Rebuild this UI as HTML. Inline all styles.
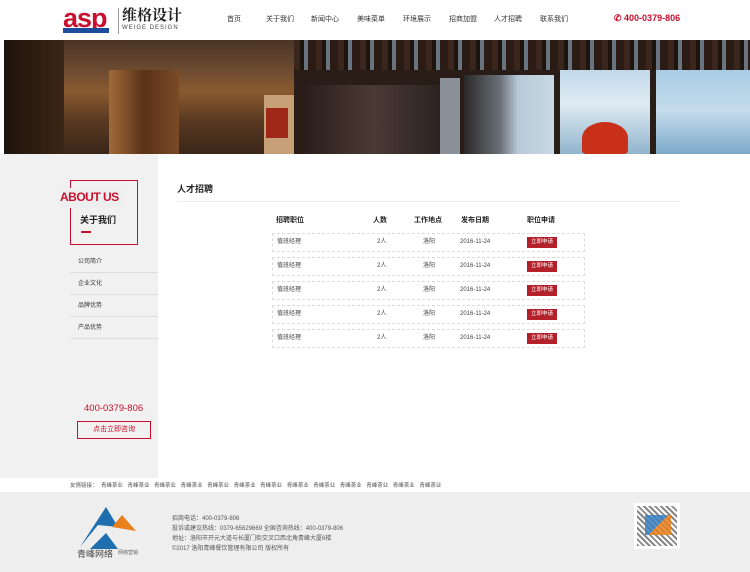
<!DOCTYPE html>
<html><head><meta charset="utf-8"><style>
*{margin:0;padding:0;box-sizing:border-box}
body{width:750px;height:572px;overflow:hidden;background:#fff;font-family:"Liberation Sans","Noto Sans CJK SC",sans-serif;color:#333;position:relative}
.a{position:absolute}
.nav span{position:absolute;top:15px;font-size:7px;line-height:9px;color:#333}
.side{left:0;top:154px;width:158px;height:324px;background:#f2f1f1}
.menu div{position:absolute;left:70px;width:88px;height:22px;border-bottom:1px solid #ddd;font-size:6px;color:#333;padding-left:8px;line-height:22px}
.row{position:absolute;left:272px;width:313px;height:19px;border:1px dashed #ddd;font-size:6px;color:#444}
.row span{position:absolute;top:3px;line-height:11px}
.btn{position:absolute;left:254px;top:3px;width:30px;height:11px;background:#b3202a;color:#fff;font-size:5.5px;text-align:center;line-height:11px}
.fl{position:absolute;top:482px;font-size:5.5px;line-height:8px;color:#555}
.b{position:absolute}
</style></head><body>
<div class="a" style="left:63px;top:4px;font:bold 27px/28px 'Liberation Sans',sans-serif;color:#c8102e;letter-spacing:-1px">asp</div>
<div class="a" style="left:63px;top:28px;width:46px;height:5px;background:#1c4d9c"></div>
<div class="a" style="left:118px;top:8px;width:1px;height:26px;background:#999"></div>
<div class="a" style="left:122px;top:6px;font:bold 15px/18px 'Noto Serif CJK SC',serif;color:#222">维格设计</div>
<div class="a" style="left:122px;top:25px;font-size:6px;color:#444;letter-spacing:1px">WEIGE DESIGN</div>
<div class="nav">
<span style="left:227px">首页</span><span style="left:266px">关于我们</span><span style="left:311px">新闻中心</span><span style="left:357px">美味菜单</span><span style="left:403px">环境展示</span><span style="left:449px">招商加盟</span><span style="left:494px">人才招聘</span><span style="left:540px">联系我们</span>
</div>
<div class="a" style="left:614px;top:13px;font-size:9px;color:#c8102e;font-weight:bold">✆ 400-0379-806</div>
<div class="a" style="left:4px;top:40px;width:746px;height:114px;overflow:hidden;background:#2a1a10">
 <div class="b" style="left:0;top:0;width:60px;height:114px;background:linear-gradient(90deg,#1e140c,#3a2616)"></div>
 <div class="b" style="left:60px;top:0;width:230px;height:114px;background:linear-gradient(180deg,#4a3426 0,#6a4a30 25%,#8a5a30 45%,#5a3a22 70%,#3a2618 100%)"></div>
 <div class="b" style="left:105px;top:30px;width:70px;height:84px;background:linear-gradient(90deg,#a06a38,#5a3218,#7a4a26)"></div>
 <div class="b" style="left:260px;top:55px;width:30px;height:59px;background:#c8a078"></div>
 <div class="b" style="left:262px;top:68px;width:22px;height:30px;background:#a02818"></div>
 <div class="b" style="left:290px;top:0;width:460px;height:114px;background:#2a1c16"></div>
 <div class="b" style="left:300px;top:45px;width:140px;height:69px;background:linear-gradient(90deg,#2a1e1a,#4a3a34,#2a2220)"></div>
 <div class="b" style="left:436px;top:38px;width:20px;height:76px;background:#8a9098"></div>
 <div class="b" style="left:460px;top:35px;width:90px;height:79px;background:linear-gradient(90deg,#2a2828,#6a7078 40%,#b8cad8 60%,#c8d8e4)"></div>
 <div class="b" style="left:556px;top:30px;width:90px;height:84px;background:linear-gradient(180deg,#c0d8ea,#e0ecf4 40%,#90b4cc)"></div>
 <div class="b" style="left:652px;top:28px;width:94px;height:86px;background:linear-gradient(180deg,#a8cce4,#c4dcec 50%,#7ca8c8)"></div>
 <div class="b" style="left:290px;top:0;width:460px;height:30px;background:repeating-linear-gradient(90deg,#3a261c 0 6px,#1e140e 6px 10px,#6a7480 10px 14px,#2a1c14 14px 22px)"></div>
 <div class="b" style="left:578px;top:82px;width:46px;height:32px;border-radius:50% 50% 10% 10%;background:#c8301a"></div>
</div>
<div class="a side"></div>
<div class="a" style="left:70px;top:180px;width:68px;height:65px;border:1px solid #c8102e"></div>
<div class="a" style="left:60px;top:188px;width:64px;height:20px;background:#eee"></div>
<div class="a" style="left:60px;top:190px;font-size:12px;font-weight:bold;color:#c8102e;letter-spacing:-.5px">ABOUT US</div>
<div class="a" style="left:80px;top:213px;font-size:9px;font-weight:bold;color:#222">关于我们</div>
<div class="a" style="left:81px;top:231px;width:10px;height:2px;background:#c8102e"></div>
<div class="menu">
<div style="top:251px">公司简介</div><div style="top:273px">企业文化</div><div style="top:295px">品牌优势</div><div style="top:317px">产品优势</div>
</div>
<div class="a" style="left:84px;top:403px;font-size:9.5px;color:#c8102e">400-0379-806</div>
<div class="a" style="left:77px;top:421px;width:74px;height:18px;border:1px solid #c8102e;font-size:7px;color:#c8102e;text-align:center;line-height:16px">点击立即咨询</div>
<div class="a" style="left:177px;top:182px;font-size:9px;font-weight:bold;color:#222">人才招聘</div>
<div class="a" style="left:177px;top:201px;width:503px;height:1px;background:#eee"></div>
<div class="a" style="top:215px;left:276px;font-size:7px;font-weight:bold;color:#222">招聘职位</div>
<div class="a" style="top:215px;left:373px;font-size:7px;font-weight:bold;color:#222">人数</div>
<div class="a" style="top:215px;left:414px;font-size:7px;font-weight:bold;color:#222">工作地点</div>
<div class="a" style="top:215px;left:461px;font-size:7px;font-weight:bold;color:#222">发布日期</div>
<div class="a" style="top:215px;left:527px;font-size:7px;font-weight:bold;color:#222">职位申请</div>
<div class="row" style="top:233px"><span style="left:4px">值班经理</span><span style="left:104px">2人</span><span style="left:150px">洛阳</span><span style="left:187px">2016-11-24</span><div class="btn">立即申请</div></div>
<div class="row" style="top:257px"><span style="left:4px">值班经理</span><span style="left:104px">2人</span><span style="left:150px">洛阳</span><span style="left:187px">2016-11-24</span><div class="btn">立即申请</div></div>
<div class="row" style="top:281px"><span style="left:4px">值班经理</span><span style="left:104px">2人</span><span style="left:150px">洛阳</span><span style="left:187px">2016-11-24</span><div class="btn">立即申请</div></div>
<div class="row" style="top:305px"><span style="left:4px">值班经理</span><span style="left:104px">2人</span><span style="left:150px">洛阳</span><span style="left:187px">2016-11-24</span><div class="btn">立即申请</div></div>
<div class="row" style="top:329px"><span style="left:4px">值班经理</span><span style="left:104px">2人</span><span style="left:150px">洛阳</span><span style="left:187px">2016-11-24</span><div class="btn">立即申请</div></div>
<div class="fl" style="left:70px">友情链接：</div>
<div class="fl" style="left:101px;word-spacing:3px;white-space:nowrap">青峰茶业 青峰茶业 青峰茶业 青峰茶业 青峰茶业 青峰茶业 青峰茶业 青峰茶业 青峰茶业 青峰茶业 青峰茶业 青峰茶业 青峰茶业</div>
<div class="a" style="left:0;top:492px;width:750px;height:80px;background:#eee"></div>
<svg class="a" style="left:78px;top:505px" width="60" height="50"><polygon points="2,42 28,2 40,22 20,20" fill="#1f6fb0"/><polygon points="12,44 28,28 40,44" fill="#1f6fb0"/><polygon points="34,22 44,10 58,26" fill="#e8801e"/></svg>
<div class="a" style="left:77px;top:547px;font-size:9px;color:#444">青峰网络</div>
<div class="a" style="left:118px;top:549px;font-size:5px;color:#666">网络营销</div>
<div class="a" style="left:172px;top:514px;font-size:6px;color:#555;line-height:10px">招商电话：400-0379-806<br>投诉或建议热线：0379-65629669 全国咨询热线：400-0379-806<br>地址：洛阳市开元大道与长厦门街交叉口西北角青峰大厦6楼<br>©2017 洛阳青峰餐饮管理有限公司 版权所有</div>
<div class="a" style="left:634px;top:503px;width:46px;height:46px;border:3px solid #fff;background:repeating-linear-gradient(45deg,#888 0 2px,#fff 2px 4px)"></div>
<div class="a" style="left:645px;top:515px;width:26px;height:20px;background:linear-gradient(135deg,#3a7fc0 50%,#e8801e 50%);opacity:.85"></div>
</body></html>
